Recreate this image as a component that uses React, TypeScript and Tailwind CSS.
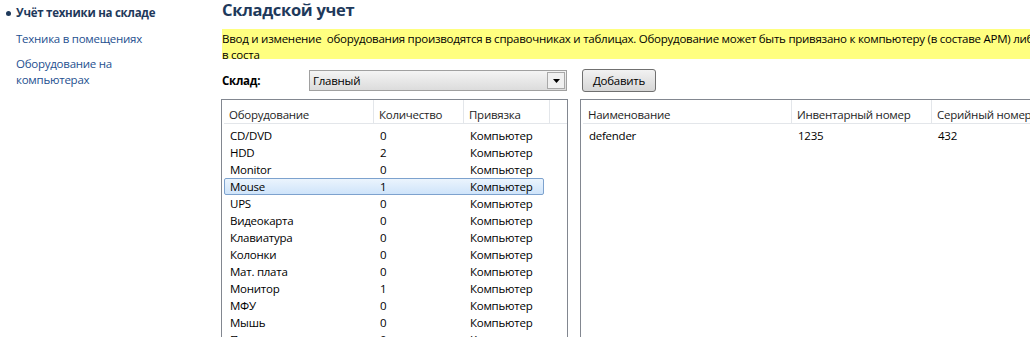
import React from "react";

type Row = { name: string; qty: string; link: string; selected?: boolean };

const rows: Row[] = [
  { name: "CD/DVD", qty: "0", link: "Компьютер" },
  { name: "HDD", qty: "2", link: "Компьютер" },
  { name: "Monitor", qty: "0", link: "Компьютер" },
  { name: "Mouse", qty: "1", link: "Компьютер", selected: true },
  { name: "UPS", qty: "0", link: "Компьютер" },
  { name: "Видеокарта", qty: "0", link: "Компьютер" },
  { name: "Клавиатура", qty: "0", link: "Компьютер" },
  { name: "Колонки", qty: "0", link: "Компьютер" },
  { name: "Мат. плата", qty: "0", link: "Компьютер" },
  { name: "Монитор", qty: "1", link: "Компьютер" },
  { name: "МФУ", qty: "0", link: "Компьютер" },
  { name: "Мышь", qty: "0", link: "Компьютер" },
  { name: "Принтер", qty: "0", link: "Компьютер" },
];

const font = { fontFamily: '"Open Sans", "Noto Sans", sans-serif' };

function HeaderCell({ children, w, last }: { children?: React.ReactNode; w: string; last?: boolean }) {
  return (
    <div className={`${w} h-full flex items-end pb-[0px] pl-[5px] shrink-0 ${last ? "" : "border-r border-[#e3e6ea]"}`}>
      {children}
    </div>
  );
}

export default function App() {
  return (
    <div className="w-[1030px] h-[337px] overflow-hidden bg-white flex text-[11.5px] tracking-[-0.25px] text-black" style={font}>
      <aside className="w-[222px] shrink-0 pt-[5px]">
        <div className="flex items-center h-[16px]">
          <span className="w-[16px] flex justify-center pl-[1px]">
            <span className="block w-[5px] h-[5px] rounded-full bg-[#1e395b]" />
          </span>
          <span className="font-bold text-[#1e395b]">Учёт техники на складе</span>
        </div>
        <div className="pl-[16px] mt-[10px] text-[#1e4f8f] leading-[16px]">Техника в помещениях</div>
        <div className="pl-[16px] mt-[9px] text-[#1e4f8f] leading-[16px] w-[150px]">Оборудование на компьютерах</div>
      </aside>

      <main className="flex-1 min-w-0">
        <h1 className="text-[16.5px] tracking-[-0.3px] font-bold text-[#1e395b] leading-[20px]">Складской учет</h1>

        <div className="mt-[9px] bg-[#ffff80] h-[30px] pt-[2px] leading-[16px] whitespace-pre">
          <div>Ввод и изменение  оборудования производятся в справочниках и таблицах. Оборудование может быть привязано к компьютеру (в составе АРМ) либо на склад</div>
          <div>в соста</div>
        </div>

        <div className="flex items-center mt-[10px] h-[23px]">
          <span className="w-[87px] font-bold">Склад:</span>
          <div className="w-[258px] h-[21px] border border-[#a0a0a0] bg-gradient-to-b from-[#f4f4f4] to-[#dcdcdc] flex items-center">
            <span className="flex-1 pl-[3px]">Главный</span>
            <span className="w-[18px] h-[17px] mr-[1px] border border-[#a8a8a8] bg-[#f0f0f0] flex items-center justify-center">
              <svg width="7" height="4" viewBox="0 0 7 4"><path d="M0 0h7L3.5 4z" fill="#000" /></svg>
            </span>
          </div>
          <button className="ml-[15px] w-[74px] h-[23px] border border-[#707070] rounded-[3px] bg-gradient-to-b from-[#f2f2f2] to-[#d6d6d6] text-black">
            Добавить
          </button>
        </div>

        <div className="flex mt-[7px] gap-[12px] h-[240px] ml-[-1px]">
          <div className="w-[347px] shrink-0 border border-[#828790] pl-[2px]">
            <div className="h-[24px] flex border-b border-[#e3e6ea] text-[#1e1e1e]">
              <HeaderCell w="w-[150px]">Оборудование</HeaderCell>
              <HeaderCell w="w-[90px]">Количество</HeaderCell>
              <HeaderCell w="w-[86px]">Привязка</HeaderCell>
              <HeaderCell w="flex-1" last />
            </div>
            <div className="pt-[3px]">
              {rows.map((r) => (
                <div
                  key={r.name}
                  className={`h-[17px] w-[320px] flex items-center rounded-[2px] border ${
                    r.selected ? "border-[#7da2ce] bg-gradient-to-b from-[#ebf4fd] to-[#cfe4fa]" : "border-transparent"
                  }`}
                >
                  <span className="w-[150px] pl-[5px]">{r.name}</span>
                  <span className="w-[90px] pl-[5px]">{r.qty}</span>
                  <span className="pl-[5px]">{r.link}</span>
                </div>
              ))}
            </div>
          </div>

          <div className="flex-1 border border-[#828790] border-r-0 pl-[2px]">
            <div className="h-[24px] flex border-b border-[#e3e6ea] text-[#1e1e1e]">
              <HeaderCell w="w-[209px]">Наименование</HeaderCell>
              <HeaderCell w="w-[140px]">Инвентарный номер</HeaderCell>
              <HeaderCell w="w-[120px]">Серийный номер</HeaderCell>
            </div>
            <div className="pt-[3px]">
              <div className="h-[17px] flex items-center">
                <span className="w-[209px] pl-[6px]">defender</span>
                <span className="w-[140px] pl-[6px]">1235</span>
                <span className="pl-[6px]">432</span>
              </div>
            </div>
          </div>
        </div>
      </main>
    </div>
  );
}
